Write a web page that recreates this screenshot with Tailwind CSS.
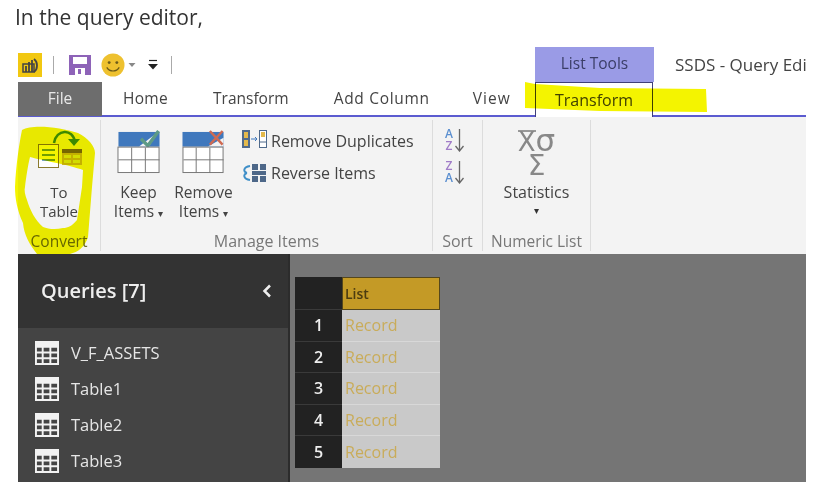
<!DOCTYPE html>
<html><head><meta charset="utf-8">
<script src="https://cdn.jsdelivr.net/npm/@tailwindcss/browser@4"></script>
</head>
<body class="bg-white">
<div class="relative w-[824px] h-[487px] overflow-hidden bg-white font-['Open_Sans','Noto_Sans',sans-serif] text-[#444]">
  <div class="h-[47px] pl-[15px] pt-[3px] text-[21px] leading-[28px] text-[#333]">In the query editor,</div>
  <div class="ml-[18px] w-[788px] h-[435px] flex flex-col overflow-hidden">
    <!-- title bar -->
    <div class="h-[35px] flex items-center relative">
      <div class="flex items-center w-[517px] shrink-0 h-full">
        <svg class="w-[24px] h-[24px]" viewBox="0 0 24 24"><rect width="24" height="24" fill="#f2c811"/><path d="M5 11h11v8H5z" fill="#f2c811" stroke="#444" stroke-width="1.500"/><path d="M8 19v-6M11 19V9M14 19V7M16 6c4 3 4 10 0 13" stroke="#444" stroke-width="1.800" fill="none"/></svg>
        <span class="w-px h-[18px] bg-[#aaa] ml-[11px]"></span>
        <svg class="w-[22px] h-[20px] ml-[15px]" viewBox="0 0 22 20"><path d="M0 0h22v20H0z" fill="#8e63b8"/><rect x="4" y="2" width="14" height="7" fill="#fff"/><rect x="6" y="13" width="10" height="7" fill="#fff"/><rect x="9" y="14" width="3" height="5" fill="#8e63b8"/></svg>
        <svg class="w-[24px] h-[24px] ml-[10px]" viewBox="0 0 25 25"><circle cx="12.500" cy="12.500" r="12" fill="#eec12f"/><circle cx="8.500" cy="10" r="1.500" fill="#6b5a1a"/><circle cx="16.500" cy="10" r="1.500" fill="#6b5a1a"/><path d="M6 15c3 5 10 5 13 0" stroke="#6b5a1a" stroke-width="1.300" fill="none"/></svg>
        <svg class="w-[8px] h-[4px] ml-[3px]" viewBox="0 0 7 4"><path d="M0 0h7L3.500 4z" fill="#888"/></svg>
        <svg class="w-[10px] h-[11px] ml-[12px]" viewBox="0 0 10 10"><path d="M1 1h8" stroke="#222" stroke-width="1.200"/><path d="M0 4.500h10L5 10z" fill="#222"/></svg>
        <span class="w-px h-[18px] bg-[#aaa] ml-[13px]"></span>
      </div>
      <div class="w-[119px] shrink-0 h-full bg-[#9a9be6] flex items-center justify-center text-[15.500px] text-[#3a3d66] pb-[2px]">List Tools</div>
      <div class="ml-[21px] text-[17px] text-[#444] whitespace-nowrap">SSDS - Query Edi</div>
    </div>
    <!-- tabs -->
    <div class="h-[35px] flex items-center text-[15.500px] border-b-[2px] border-[#5b5bd0] text-[#444] relative">
      <div class="w-[84px] h-[34px] bg-[#6d6d6d] text-[#e8e8e8] flex items-center justify-center -mb-[2px] self-start">File</div>
      <span class="ml-[21px] tracking-[0.3px]">Home</span>
      <span class="ml-[45px]">Transform</span>
      <span class="ml-[45px] tracking-[0.7px]">Add Column</span>
      <span class="ml-[43px] tracking-[1px]">View</span>
      <div class="absolute left-[517px] top-0 w-[118px] h-[35px] border-x-[1.500px] border-t-[1.500px] border-[#3f3f7a] bg-white flex items-center justify-center text-[#444] text-[16px] font-medium">Transform</div>
    </div>
    <!-- ribbon -->
    <div class="h-[137px] bg-[#f3f3f3] flex text-[#555] text-[15.500px] leading-[19px]">
      <div class="w-[83px] flex flex-col items-center border-r border-[#dcdcdc] my-[3px]">
        <svg class="w-[46px] h-[40px] mt-[10px] ml-[2px]" viewBox="0 0 46 40"><path d="M17 13c2-14 19-15 21-1" stroke="#3f8f3a" stroke-width="2.500" fill="none"/><path d="M31 9h12l-6 7z" fill="#3f8f3a"/><rect x="1.500" y="14.500" width="20" height="23" fill="#fff" stroke="#8a7a2e"/><path d="M5 20h13M5 25h13M5 30h13" stroke="#4a86c8" stroke-width="1.600"/><rect x="25" y="19" width="20" height="16" fill="#cdb83a"/><rect x="25" y="19" width="20" height="4" fill="#7b6c1e"/><path d="M27 25h7v3h-7zM36 25h7v3h-7zM27 30h7v3h-7zM36 30h7v3h-7z" fill="#dde6f2"/></svg>
        <div class="text-center mt-[13px] leading-[19px] text-[15px] text-[#444]">To<br>Table</div>
        <div class="mt-auto text-[#6b6b2a]">Convert</div>
      </div>
      <div class="w-[332px] flex flex-col border-r border-[#dcdcdc] my-[3px] relative">
        <div class="flex">
          <div class="w-[65px] ml-[5px] flex flex-col items-center text-[#444]">
            <svg class="w-[44px] h-[44px] mt-[10px]" viewBox="0 0 44 45"><rect x="1" y="2" width="42" height="15" fill="#3f78bd"/><path d="M22 17l10 0 11-16" fill="#f3f3f3"/><path d="M24 9l7 7 11-15" stroke="#5d9a86" stroke-width="3.500" fill="none"/><rect x=".5" y="17.500" width="42" height="26" fill="#fff" stroke="#777"/><path d="M14.500 18v26M28.500 18v26M1 30.500h42" stroke="#777"/></svg>
            <div class="text-center mt-[9px] whitespace-nowrap">Keep<br>Items <span class="text-[10px]">▾</span></div>
          </div>
          <div class="w-[65px] flex flex-col items-center text-[#444]">
            <svg class="w-[44px] h-[44px] mt-[10px]" viewBox="0 0 44 45"><rect x="0" y="2" width="42" height="15" fill="#3f78bd"/><path d="M26 17h16V8z" fill="#f3f3f3"/><path d="M28 1l13 14M41 1L28 15" stroke="#cf6a52" stroke-width="2.500"/><rect x=".5" y="17.500" width="41" height="26" fill="#fff" stroke="#777"/><path d="M14 18v26M28 18v26M1 30.500h41" stroke="#777"/></svg>
            <div class="text-center mt-[9px] whitespace-nowrap">Remove<br>Items <span class="text-[10px]">▾</span></div>
          </div>
          <div class="ml-[6px] pt-[9px] text-[16px] text-[#444] whitespace-nowrap">
            <div class="flex items-center h-[24px]">
              <svg class="w-[25px] h-[18px] mr-[4px] shrink-0 -mt-[4px]" viewBox="0 0 25 18"><rect x="0" y="0" width="8" height="18" fill="#4f6a8c"/><rect x="2" y="2" width="4" height="6" fill="#e3b94b"/><rect x="2" y="10" width="4" height="6" fill="#e3b94b"/><path d="M9 9h6M13 7l2 2-2 2" stroke="#3f78bd" fill="none"/><rect x="17.500" y=".5" width="7" height="17" fill="#fff" stroke="#4f6a8c"/><rect x="19" y="2" width="4" height="5" fill="#e3b94b"/><path d="M18 12h6" stroke="#4f6a8c"/></svg>
              Remove Duplicates
            </div>
            <div class="flex items-center h-[24px] mt-[8px]">
              <svg class="w-[25px] h-[20px] mr-[4px] shrink-0" viewBox="0 0 25 20"><path d="M8 3C1 4 1 9 5 10M8 17C1 16 1 11 5 10" stroke="#3f8fc8" stroke-width="2" fill="none"/><path d="M10 1h6v6h-6zM18 1h6v6h-6zM10 8h14v4H10zM10 13h6v6h-6zM18 13h6v6h-6z" fill="#4d6788"/></svg>
              Reverse Items
            </div>
          </div>
        </div>
        <div class="mt-auto text-center text-[#777] text-[16px]">Manage Items</div>
      </div>
      <div class="w-[50px] flex flex-col border-r border-[#dcdcdc] my-[3px] items-center">
        <div class="flex items-center mt-[8px] -ml-[6px] h-[24px]"><div class="text-[12px] leading-[12px] font-semibold text-center"><div class="text-[#5b8fd0]">A</div><div class="text-[#a07cc8]">Z</div></div><svg class="w-[9px] h-[23px] ml-[2px]" viewBox="0 0 9 23"><path d="M4.500 0v21M.5 17l4 5 4-5" stroke="#666" stroke-width="1.300" fill="none"/></svg></div>
        <div class="flex items-center mt-[8px] -ml-[6px] h-[24px]"><div class="text-[12px] leading-[12px] font-semibold text-center"><div class="text-[#a07cc8]">Z</div><div class="text-[#5b8fd0]">A</div></div><svg class="w-[9px] h-[23px] ml-[2px]" viewBox="0 0 9 23"><path d="M4.500 0v21M.5 17l4 5 4-5" stroke="#666" stroke-width="1.300" fill="none"/></svg></div>
        <div class="mt-auto text-[#777] text-[16px]">Sort</div>
      </div>
      <div class="w-[108px] flex flex-col border-r border-[#dcdcdc] my-[3px] items-center">
        <div class="mt-[9px] text-[#888] text-[26px] leading-[23px] text-center font-['DejaVu_Sans',sans-serif]"><div class="whitespace-nowrap"><span class="border-t-2 border-[#999] leading-[21px] inline-block">X</span><span class="text-[31px]">σ</span></div><div class="text-[28px] leading-[22px] mt-[1px]">Σ</div></div>
        <div class="mt-[6px] text-[#444] text-[16px]">Statistics</div>
        <div class="text-[#333] text-[10px] leading-[14px] mt-[1px]">▾</div>
        <div class="mt-auto text-[#777]">Numeric List</div>
      </div>
    </div>
    <!-- lower -->
    <div class="flex-1 flex bg-[#757575] min-h-0">
      <div class="w-[270px] bg-[#444] flex flex-col text-[#e6e6e6] border-r-[2px] border-[#2c2c2c] box-content">
        <div class="h-[74px] bg-[#333] flex items-center justify-between pl-[23px] pr-[15px] text-[20px] font-semibold text-[#eee]"><span>Queries [7]</span>
          <svg class="w-[12px] h-[14px]" viewBox="0 0 12 14"><path d="M9 1.500L3.500 7 9 12.500" stroke="#eee" stroke-width="2.500" fill="none"/></svg></div>
        <div class="pt-[7px] text-[16.500px] flex flex-col">
          <div class="h-[36px] flex items-center pl-[17px] gap-[12px]"><svg class="w-[24px] h-[24px]" viewBox="0 0 25 25"><rect width="25" height="25" fill="#f2f2f2"/><path d="M2 7h5v4H2zM9 7h6v4H9zM17 7h6v4h-6zM2 13h5v4H2zM9 13h6v4H9zM17 13h6v4h-6zM2 19h5v4H2zM9 19h6v4H9zM17 19h6v4h-6z" fill="#444"/></svg>V_F_ASSETS</div>
          <div class="h-[36px] flex items-center pl-[17px] gap-[12px]"><svg class="w-[24px] h-[24px]" viewBox="0 0 25 25"><rect width="25" height="25" fill="#f2f2f2"/><path d="M2 7h5v4H2zM9 7h6v4H9zM17 7h6v4h-6zM2 13h5v4H2zM9 13h6v4H9zM17 13h6v4h-6zM2 19h5v4H2zM9 19h6v4H9zM17 19h6v4h-6z" fill="#444"/></svg>Table1</div>
          <div class="h-[36px] flex items-center pl-[17px] gap-[12px]"><svg class="w-[24px] h-[24px]" viewBox="0 0 25 25"><rect width="25" height="25" fill="#f2f2f2"/><path d="M2 7h5v4H2zM9 7h6v4H9zM17 7h6v4h-6zM2 13h5v4H2zM9 13h6v4H9zM17 13h6v4h-6zM2 19h5v4H2zM9 19h6v4H9zM17 19h6v4h-6z" fill="#444"/></svg>Table2</div>
          <div class="h-[36px] flex items-center pl-[17px] gap-[12px]"><svg class="w-[24px] h-[24px]" viewBox="0 0 25 25"><rect width="25" height="25" fill="#f2f2f2"/><path d="M2 7h5v4H2zM9 7h6v4H9zM17 7h6v4h-6zM2 13h5v4H2zM9 13h6v4H9zM17 13h6v4h-6zM2 19h5v4H2zM9 19h6v4H9zM17 19h6v4h-6z" fill="#444"/></svg>Table3</div>
        </div>
      </div>
      <div class="pl-[5px] pt-[23px]">
        <div class="grid grid-cols-[47px_98px] grid-rows-[33px_repeat(5,31.600px)] w-[145px] text-[16px] font-semibold">
          <div class="bg-[#222] border-b border-[#3a3a3a]"></div>
          <div class="bg-[#c49a26] border border-[#55471c] text-[#4c3c10] text-[14px] flex items-center pl-[2px] font-semibold">List</div>
          <div class="bg-[#222] border-b border-[#3a3a3a] text-[#eee] flex items-center justify-center">1</div>
          <div class="bg-[#c9c9c9] border-b border-[#d8d8d8] text-[#c9ac5a] font-normal flex items-center pl-[3px]">Record</div>
          <div class="bg-[#222] border-b border-[#3a3a3a] text-[#eee] flex items-center justify-center">2</div>
          <div class="bg-[#c9c9c9] border-b border-[#d8d8d8] text-[#c9ac5a] font-normal flex items-center pl-[3px]">Record</div>
          <div class="bg-[#222] border-b border-[#3a3a3a] text-[#eee] flex items-center justify-center">3</div>
          <div class="bg-[#c9c9c9] border-b border-[#d8d8d8] text-[#c9ac5a] font-normal flex items-center pl-[3px]">Record</div>
          <div class="bg-[#222] border-b border-[#3a3a3a] text-[#eee] flex items-center justify-center">4</div>
          <div class="bg-[#c9c9c9] border-b border-[#d8d8d8] text-[#c9ac5a] font-normal flex items-center pl-[3px]">Record</div>
          <div class="bg-[#222] text-[#eee] flex items-center justify-center">5</div>
          <div class="bg-[#c9c9c9] text-[#c9ac5a] font-normal flex items-center pl-[3px]">Record</div>
        </div>
      </div>
    </div>
  </div>
  <!-- yellow highlighter strokes -->
  <svg class="absolute left-0 top-0 w-[824px] h-[487px] pointer-events-none mix-blend-multiply" viewBox="0 0 824 487">
    <path d="M525 82L535 84 600 88 706 89 707 112 600 111 525 108Z" fill="#f4f400"/>
    <path fill-rule="evenodd" d="M22 130C32 124 60 127 78 133 88 138 95 146 95 153L92 187 88 237C85 247 78 252 70 254L37 254C30 245 24 235 23 223 17 210 15 198 15 187 16 165 19 145 22 130ZM30 157C40 160 70 165 83 170L82 187 77 220C72 226 68 228 63 228 55 230 48 229 43 227 35 220 30 210 27 200 25 195 24 190 25 187 26 178 28 165 30 157Z" fill="#f4f400"/>
  </svg>
</div>
</body></html>
